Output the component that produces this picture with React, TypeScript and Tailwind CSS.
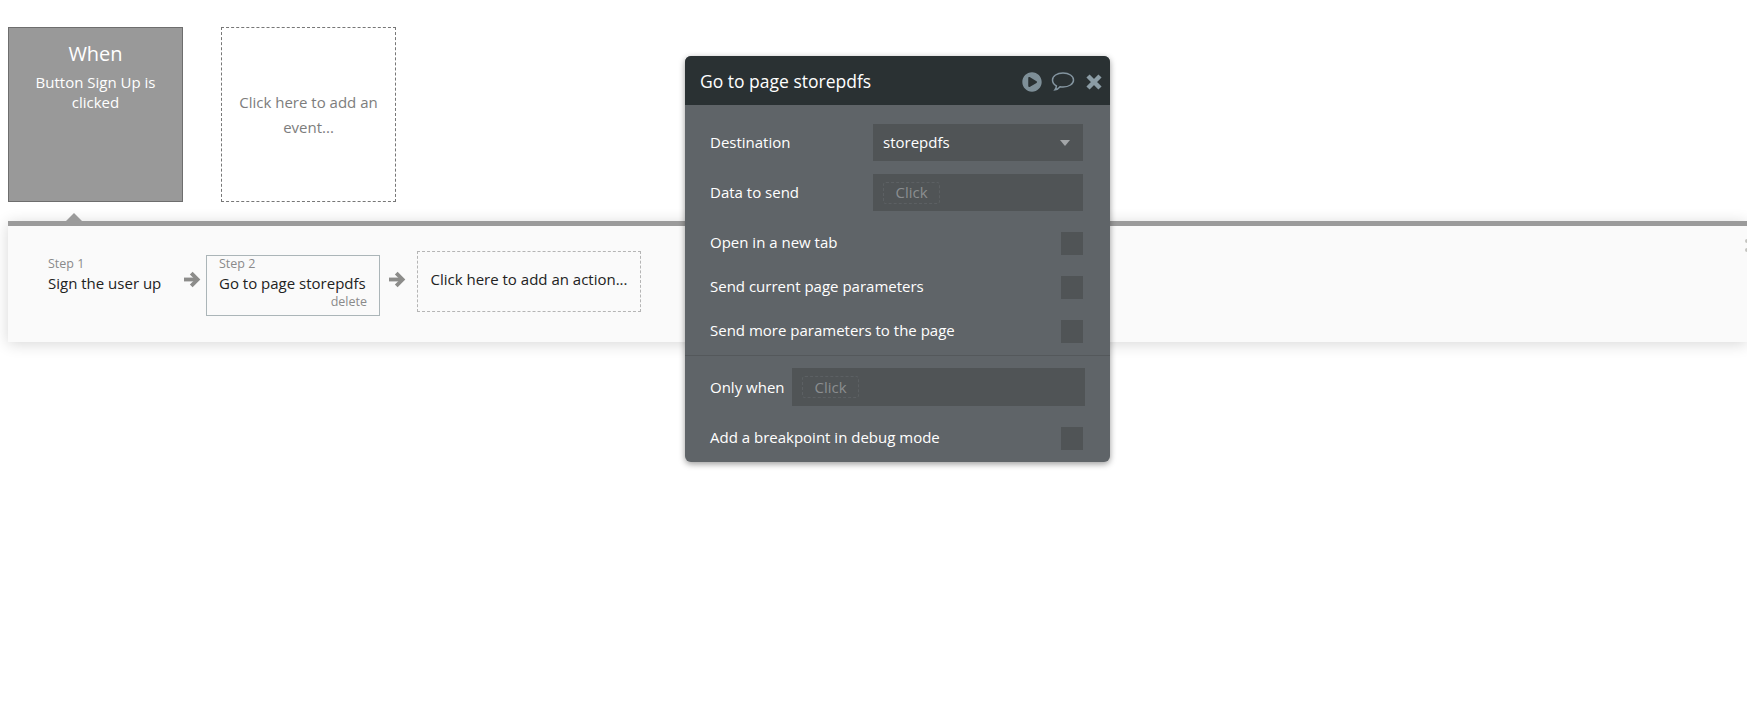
import React from "react";
import { FaPlayCircle } from "react-icons/fa";

const Check = ({ label, className = "" }: { label: string; className?: string }) => (
  <div className={`flex items-center justify-between ${className}`}>
    <span className="-translate-y-px">{label}</span>
    <div className="w-[22px] h-[23px] bg-[#505456]" />
  </div>
);

const ClickChip = () => (
  <div className="h-[22px] w-[57px] flex items-center justify-center rounded-[3px] border border-dashed border-[#5c6063] text-[#8b8e90]">
    Click
  </div>
);

const Arrow = ({ className = "" }: { className?: string }) => (
  <svg viewBox="0 0 20 20" className={`w-[17px] h-[17px] shrink-0 ${className}`} fill="none" stroke="#8c8c8a" strokeWidth="4.5">
    <path d="M0 10h15" />
    <path d="M8.500 2.500 16 10l-7.500 7.500" />
  </svg>
);

export default function App() {
  return (
    <div className="relative w-full h-[707px] bg-white overflow-hidden font-['Open_Sans',sans-serif]">
      {/* Event cards */}
      <div className="flex gap-[38px] pl-2 pt-[27px]">
        <div className="w-[175px] h-[175px] bg-[#999999] border border-[#6e6e6e] text-white text-center px-2 pt-[12px]">
          <div className="text-[20px] leading-[28px]">When</div>
          <div className="text-[15px] leading-[20px] mt-[4px]">
            Button Sign Up is
            <br />
            clicked
          </div>
        </div>
        <div className="w-[175px] h-[175px] border border-dashed border-[#777777] flex items-center justify-center text-center text-[15px] leading-[25px] text-[#7d7d7d]">
          <div>
            Click here to add an
            <br />
            event...
          </div>
        </div>
      </div>

      {/* Steps panel */}
      <div className="relative ml-2 mt-[19px] h-[121px] bg-[#fafafa] border-t-[5px] border-[#9b9b9b] shadow-[0_2px_14px_rgba(0,0,0,0.16)] flex items-start text-[15px] text-[#222222]">
        <div className="absolute -top-[13px] left-[58px] w-0 h-0 border-x-[8px] border-x-transparent border-b-[8px] border-b-[#9b9b9b]" />
        <div className="flex items-start ml-10">
          <div className="w-[136px] mt-[30px]">
            <div className="text-[12.5px] leading-[16px] text-[#8a8a8a]">Step 1</div>
            <div className="leading-[20px] mt-px whitespace-nowrap">Sign the user up</div>
          </div>
          <Arrow className="mt-[45px]" />
          <div className="ml-[5px] mt-[29px] w-[174px] h-[61px] border border-[#abb5b8] px-[12px]">
            <div className="text-[12.5px] leading-[16px] text-[#8a8a8a]">Step 2</div>
            <div className="leading-[20px] mt-px whitespace-nowrap">Go to page storepdfs</div>
            <div className="text-[12.5px] leading-[16px] text-right text-[#8a8a8a] mt-px">delete</div>
          </div>
          <Arrow className="ml-[9px] mt-[45px]" />
          <div className="ml-[11px] mt-[25px] w-[224px] h-[61px] border border-dashed border-[#b5b5b5] flex items-center justify-center whitespace-nowrap pb-[5px]">
            Click here to add an action...
          </div>
        </div>
        <div className="absolute right-[-6px] top-[13px] flex flex-col gap-[5px]">
          <div className="w-2 h-1 rounded-full bg-[#c4c4c0]" />
          <div className="w-2 h-1 rounded-full bg-[#c4c4c0]" />
        </div>
      </div>

      {/* Action editor */}
      <div className="absolute left-[685px] top-[56px] w-[425px] h-[406px] bg-[#5f6468] rounded-[6px] overflow-hidden shadow-[0_2px_6px_rgba(0,0,0,0.4)] text-white text-[15px]">
        <div className="h-[49px] bg-[#2a3133] flex items-center pl-[15px] pr-2 pt-[2px]">
          <span className="text-[17.5px] flex-1">Go to page storepdfs</span>
          <FaPlayCircle className="w-5 h-5 text-[#7e8f98]" />
          <svg viewBox="0 0 24 20" className="w-[24px] h-[21px] ml-[9px]" fill="none" stroke="#8495a0" strokeWidth="1.500">
            <path d="M12 1.500c6 0 10.500 3 10.500 7s-4.500 7-10.500 7c-1 0-2-.1-3-.3-1.200 1.500-3 2.800-5 3.100.8-1.100 1.300-2.400 1.400-4C2.900 13 1.500 10.900 1.500 8.500c0-4 4.500-7 10.500-7z" />
          </svg>
          <svg viewBox="0 0 16 16" className="w-4 h-4 ml-[11px]" fill="none" stroke="#8b9ca5" strokeWidth="4.500">
            <path d="M2 2l12 12M14 2 2 14" />
          </svg>
        </div>
        <div className="pl-[25px] pr-[27px]">
          <div className="flex items-center justify-between mt-[19px]">
            <span>Destination</span>
            <div className="w-[210px] h-[37px] bg-[#505456] flex items-center justify-between pl-[10px] pr-[13px]">
              <span>storepdfs</span>
              <div className="w-0 h-0 border-x-[5.500px] border-x-transparent border-t-[6px] border-t-[#a3a6a8]" />
            </div>
          </div>
          <div className="flex items-center justify-between mt-[13px]">
            <span>Data to send</span>
            <div className="w-[210px] h-[37px] bg-[#505456] flex items-center pl-[10px]">
              <ClickChip />
            </div>
          </div>
          <Check label="Open in a new tab" className="mt-[21px]" />
          <Check label="Send current page parameters" className="mt-[21px]" />
          <Check label="Send more parameters to the page" className="mt-[21px]" />
        </div>
        <div className="h-px bg-[#54585b] mt-[12px]" />
        <div className="pl-[25px] pr-[27px]">
          <div className="flex items-center mt-[12px]">
            <span className="w-[82px] shrink-0 whitespace-nowrap">Only when</span>
            <div className="w-[293px] shrink-0 h-[38px] bg-[#505456] flex items-center pl-[10px]">
              <ClickChip />
            </div>
          </div>
          <Check label="Add a breakpoint in debug mode" className="mt-[21px]" />
        </div>
      </div>
    </div>
  );
}
